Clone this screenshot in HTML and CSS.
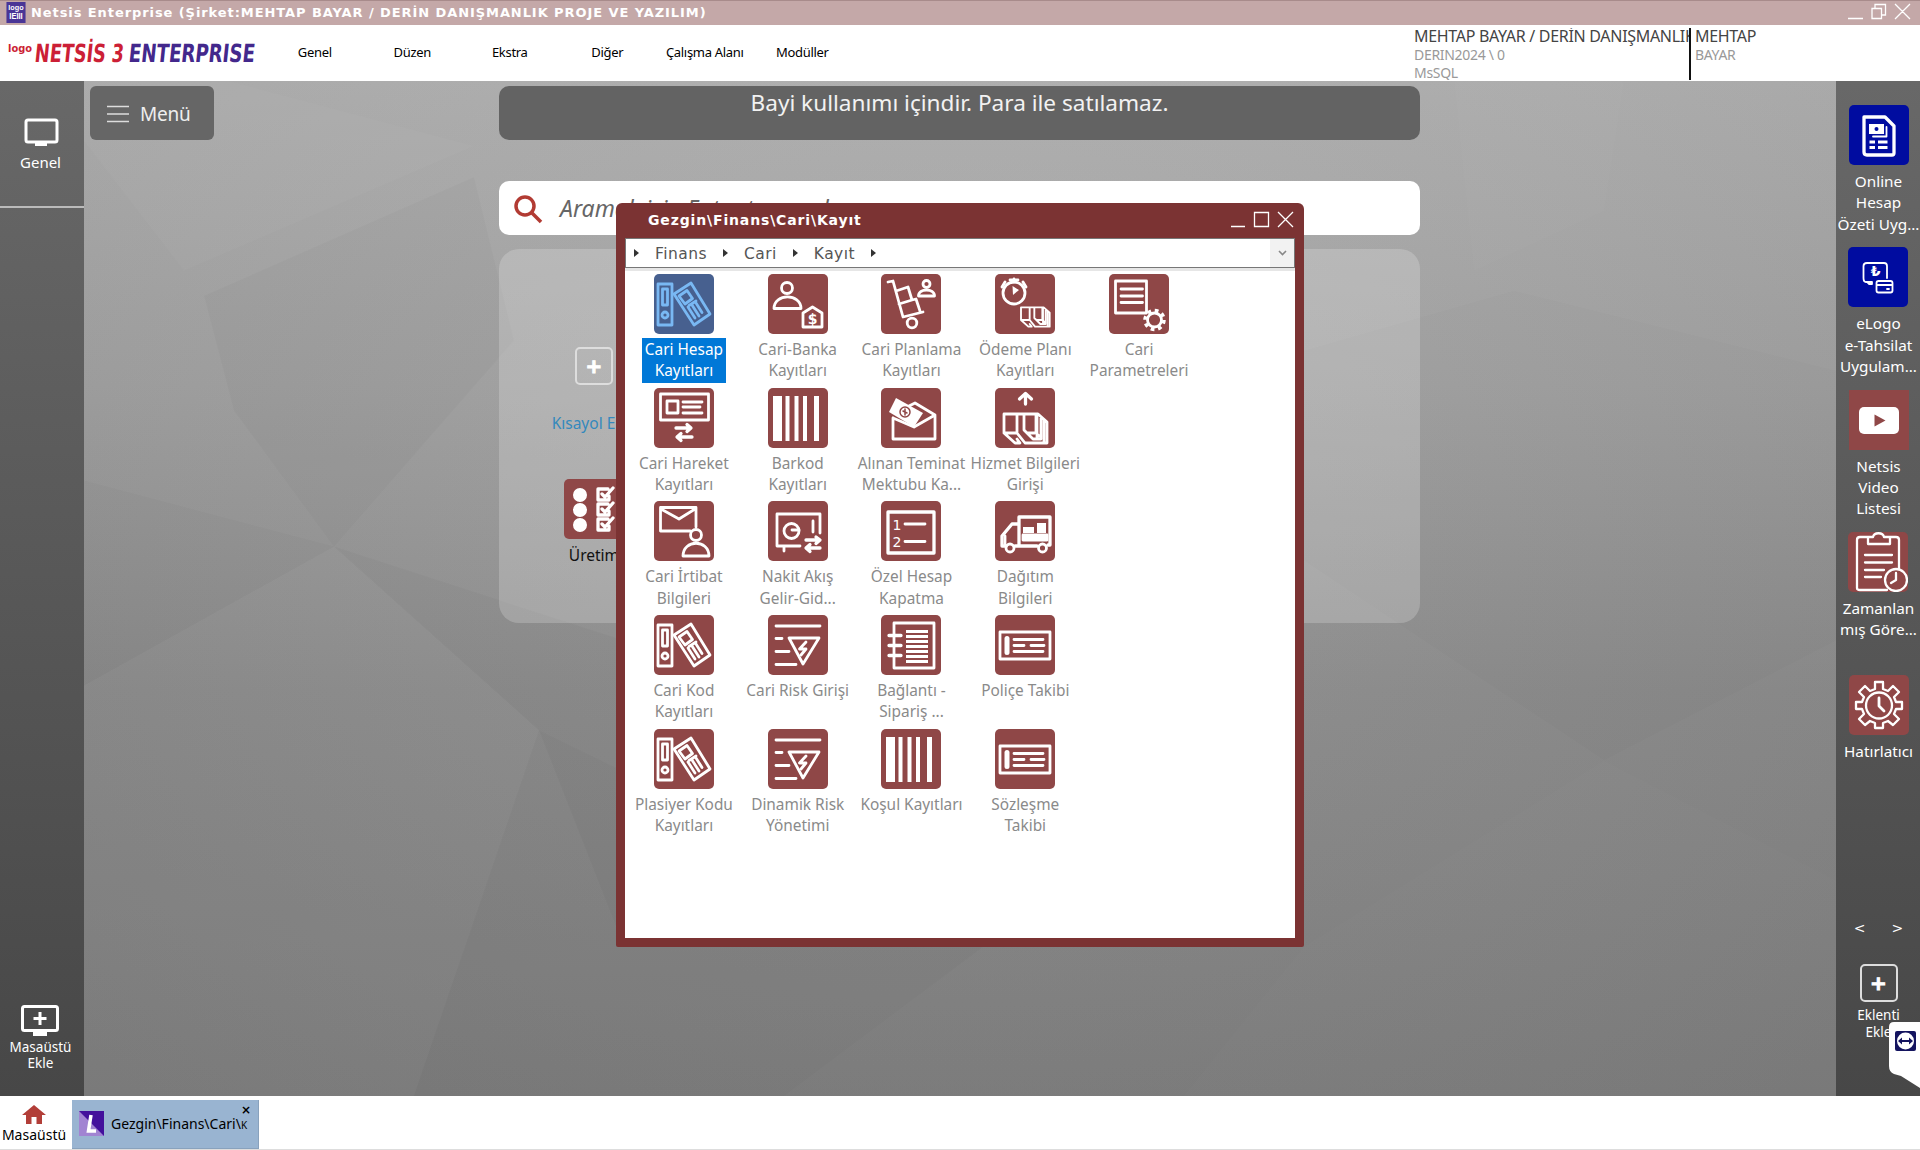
FILE: index.html
```html
<!DOCTYPE html>
<html lang="tr">
<head>
    <meta charset="UTF-8">
    <title>Netsis Enterprise</title>
    <link rel="stylesheet" href="styles.css">
</head>
<body>
    <!-- icon set, all drawn on a 60x60 tile -->
    <svg class="sprite" width="0" height="0">
        <symbol id="binders" viewBox="0 0 60 60">
            <rect x="4" y="10" width="14" height="41"/><rect x="8.5" y="15" width="5" height="16"/><circle cx="11" cy="41" r="3"/>
            <path d="M20 20L37 9L56 40L40 51Z"/><path d="M25 22L33 16.5L38.500 24.500L31 30Z"/><path d="M35 31.500L42 27M34 33L41 44M38 31L45 42M42 29L48 38.500"/>
        </symbol>
        <symbol id="bank" viewBox="0 0 60 60">
            <circle cx="19" cy="14" r="5.5"/><path d="M6 34.500C6 19 33 19 33 34.500Z"/>
            <path d="M35 39L44.500 33L54 39V53H35Z"/><text x="44.500" y="49.500" class="glyph">$</text>
        </symbol>
        <symbol id="trolley" viewBox="0 0 60 60">
            <path d="M7 8L12 7L22 43L42 38M15 17L27 13L31 26L18 30M31 26L35 25L39 37"/>
            <circle cx="31" cy="49" r="4.800"/><circle cx="45.500" cy="10" r="3.500"/><path d="M37.500 22C37.500 14 53.500 14 53.500 22Z"/>
        </symbol>
        <symbol id="cash" viewBox="0 0 60 60">
            <path d="M9 26H22V45H9ZM29 26H41V45H32L29 42ZM9 45L20 55H25L22 51M22 26H29M22 45L30 55H52V34L43 26H41M32 45L38 51H42V28M41 45L44 48M46 30V51H42M49 32V54"/>
        </symbol>
        <symbol id="payplan" viewBox="0 0 60 60">
            <circle cx="19" cy="19" r="11"/><path d="M15 6H23M10 8L7 13M28 8L31 13M19 5V8"/><path class="solid" d="M17.500 12L24 16L18 21Z"/>
            <use href="#cash" x="20" y="14" width="40" height="44"/>
        </symbol>
        <symbol id="params" viewBox="0 0 60 60">
            <rect x="6.500" y="7" width="31" height="32"/><path d="M12 15H33.500M12 22H33.500M12 28.500H33.500"/>
            <circle cx="45.500" cy="46" r="9.500" class="teeth"/><circle cx="45.500" cy="46" r="7" class="cover"/>
        </symbol>
        <symbol id="movement" viewBox="0 0 60 60">
            <rect x="6.500" y="6" width="48" height="26"/><rect x="13" y="13" width="11" height="12"/><path d="M29 14H48M29 19H46M29 25H48"/>
            <path class="thick" d="M22 40H36M33 36.500L37 40L33 43.500M38 49H24M27 45.500L23 49L27 52.500"/>
        </symbol>
        <symbol id="barcode" viewBox="0 0 60 60">
            <path class="solid" d="M5 8H14V53H5ZM17.500 8H21.500V53H17.500ZM26.500 8H30.500V53H26.500ZM35 8H39V53H35ZM46 8H51V53H46Z"/>
        </symbol>
        <symbol id="envelope" viewBox="0 0 60 60">
            <path d="M12 30V51H54V27L34 15L28 18M12 30L33 39L54 27"/><path class="solid" d="M15 10L42 25L33 39L8 24Z"/>
            <circle class="cut" cx="24" cy="24" r="5"/><path class="cut" d="M22 23L26 25M24 21V27"/>
        </symbol>
        <symbol id="service" viewBox="0 0 60 60">
            <path class="thick" d="M30.500 16V6M24.500 11L30.500 5.500L36.500 11"/><use href="#cash"/>
        </symbol>
        <symbol id="contact" viewBox="0 0 60 60">
            <path d="M36 30H6.500V6.500H42V26M7 8L25 18L41 8"/><circle cx="42" cy="34" r="5.500"/><path d="M29 55C29 38 55 38 55 55Z"/>
        </symbol>
        <symbol id="safe" viewBox="0 0 60 60">
            <path d="M52 32V13H9V45H32M16 45V50M45 20V31"/><circle cx="23.500" cy="30" r="7.500"/><path d="M31 29H24"/>
            <path class="thick" d="M38 39H51M48 36L52 39L48 42.500M52 47H39M42 43.500L38 47L42 50.500"/>
        </symbol>
        <symbol id="numbers" viewBox="0 0 60 60">
            <rect x="7" y="11" width="46" height="41" class="wide"/><path d="M24 23H44M24 40.500H44"/>
            <text x="16" y="28.500" class="num">1</text><text x="16" y="46" class="num">2</text>
        </symbol>
        <symbol id="truck" viewBox="0 0 60 60">
            <path class="wide" d="M11 45H7V35L17 23H24V45M20 45H42M24 43V16H55V44H53"/><circle cx="15" cy="47" r="4"/><circle cx="47.500" cy="47" r="4"/>
            <path d="M28 34H52V39H28ZM10 35V43"/><path class="solid" d="M28 26H39V32H28ZM42 22H51V32H42ZM28 35H52V38H28Z"/>
        </symbol>
        <symbol id="risk" viewBox="0 0 60 60">
            <path d="M8 11H52M8 23.500H14M8 36.500H21M8 49.500H28M21 23H51L35 49Z"/><path d="M38 27L31.500 34H38L33 40"/>
        </symbol>
        <symbol id="notebook" viewBox="0 0 60 60">
            <rect x="13" y="8" width="40" height="45"/><path class="thick" d="M8 20.500H20M8 30.500H20M8 40.500H20"/>
            <path class="rows" d="M25 16.500H47M25 21.500H47M25 26.500H47M25 31.500H47M25 36.500H47M25 41.500H47M25 46.500H47"/>
        </symbol>
        <symbol id="policy" viewBox="0 0 60 60">
            <rect x="5" y="17" width="50" height="27"/><path class="bar" d="M12 23.500V37.500"/><path d="M19 24.500H48M19 30.500H29M36 30.500H49M19 36.500H48"/>
        </symbol>
        <symbol id="checks" viewBox="0 0 60 60">
            <path class="solid" d="M9 16a7 7 0 1 0 14 0a7 7 0 1 0-14 0M9 31a7 7 0 1 0 14 0a7 7 0 1 0-14 0M9 46a7 7 0 1 0 14 0a7 7 0 1 0-14 0"/>
            <path class="thick" d="M44 10H34V21H45V17M38 15L41 18L49 9M44 25H34V36H45V32M38 30L41 33L49 24M44 40H34V51H45V47M38 45L41 48L49 39"/>
        </symbol>
        <symbol id="statement" viewBox="0 0 60 60">
            <path class="thick" d="M15 12H36L45 21V48Q45 50 43 50H18Q15 50 15 47Z"/><path class="solid" d="M20 19H35V29H20Z"/><circle cx="27.500" cy="24" r="2" class="hole"/>
            <path d="M37.500 22V31.500H24" class="thin"/><path class="rows" d="M20.500 37H26M29 37H38.500M20.500 42.500H26M29 42.500H38.500"/>
        </symbol>
        <symbol id="collect" viewBox="0 0 60 60">
            <path class="thin" d="M24 36H20M39 31V19Q39 16 36 16H19Q15.500 16 15.500 19V31Q15.500 35 18 35H24V37H21"/><text x="27.500" y="29" class="glyph">₺</text>
            <rect class="thin" x="28.500" y="34" width="16" height="11.500" rx="2"/><path class="thin" d="M29 38H44M39 42H41"/>
        </symbol>
        <symbol id="video" viewBox="0 0 60 60">
            <rect class="solid" x="10" y="17" width="40" height="27" rx="5"/><path class="hole" d="M25.500 24.500V36.500L36.500 30.500Z"/>
        </symbol>
        <symbol id="tasks" viewBox="0 0 60 60">
            <path class="slim" d="M20 5H12Q9 5 9 8V56Q9 58 12 58H39M42 5H48Q51 5 51 8V38M42 5H36C35 0 26 0 25 5H20V12H42Z"/>
            <path class="slim" d="M17 23H44M17 30.500H44M17 38H36M17 45H33"/><circle cx="48" cy="48" r="11" class="cover slim"/><path class="slim" d="M48 41V48L43 51"/>
        </symbol>
        <symbol id="gear" viewBox="0 0 60 60">
            <path class="slim" d="M26 7H34V14L39 16L44 11L50 17L45 22L47 27H53V34H47L45 39L50 44L44 50L39 46L34 48V53H26V48L21 46L16 50L10 44L15 39L13 34H7V27H13L15 22L10 17L16 11L21 16L26 14Z"/>
            <circle class="slim" cx="30" cy="30.500" r="13"/><path d="M30 23V31L35 36"/>
        </symbol>
    </svg>

    <div class="titlebar">
        <svg class="app-icon" viewBox="0 0 20 22"><rect width="20" height="22"/><text x="2" y="8" textLength="16" lengthAdjust="spacingAndGlyphs">logo</text><text x="3" y="18" class="big" textLength="14" lengthAdjust="spacingAndGlyphs">IEIII</text></svg>
        <span class="app-title">Netsis Enterprise (Şirket:MEHTAP BAYAR / DERİN DANIŞMANLIK PROJE VE YAZILIM)</span>
        <svg class="controls" width="66" height="24" viewBox="0 0 66 24"><path d="M3 18.500H18M27 8.500H36.500V18.500H27ZM30 8V4.500H40.500V15H37M50 4L65 19M65 4L50 19"/></svg>
    </div>

    <div class="header">
        <svg class="logo" width="262" height="56" viewBox="0 0 262 56">
            <text class="red small" x="8" y="27" textLength="24" lengthAdjust="spacingAndGlyphs">logo</text>
            <g transform="translate(4 0) skewX(-6)">
                <text class="red" x="34" y="37" textLength="71" lengthAdjust="spacingAndGlyphs">NETSİS</text>
                <text class="red" x="111" y="37" textLength="12" lengthAdjust="spacingAndGlyphs">3</text>
                <text class="purple" x="128" y="37" textLength="126" lengthAdjust="spacingAndGlyphs">ENTERPRISE</text>
            </g>
        </svg>
        <div class="menu">
            <span>Genel</span><span>Düzen</span><span>Ekstra</span><span>Diğer</span><span>Çalışma Alanı</span><span>Modüller</span>
        </div>
        <div class="company">
            <div class="name">MEHTAP BAYAR / DERİN DANIŞMANLIK</div>
            <div>DERIN2024 \ 0</div>
            <div>MsSQL</div>
        </div>
        <div class="user">
            <div class="name">MEHTAP</div>
            <div>BAYAR</div>
        </div>
    </div>

    <div class="main">
        <div class="sidebar left">
            <div class="side-tab">
                <svg width="36" height="30" viewBox="0 0 36 30"><rect x="3" y="3" width="31" height="22" rx="2"/><path class="solid" d="M12 25H24V29H12Z"/></svg>
                <span>Genel</span>
            </div>
            <div class="side-add">
                <svg width="40" height="33" viewBox="0 0 40 33"><rect x="2.500" y="2.500" width="35" height="24" rx="2"/><path class="solid" d="M13 27H27V32H13Z"/><path d="M20 8V21M13.500 14.500H26.500"/></svg>
                <span>Masaüstü<br>Ekle</span>
            </div>
        </div>

        <div class="desktop">
            <svg class="wallpaper" viewBox="0 0 1752 1016" preserveAspectRatio="none">
                <path fill="#fff" opacity=".025" d="M145 0L390 65L100 190L0 60V0Z"/>
                <path fill="#000" opacity=".02" d="M120 215L390 96L430 260L250 466L150 330Z"/>
                <path fill="#fff" opacity=".015" d="M0 605L250 466L455 650L330 1016H0Z"/>
                <path fill="#000" opacity=".025" d="M250 466L540 560V866L455 650Z"/>
                <path fill="#000" opacity=".02" d="M0 400L250 466L0 605Z"/>
                <path fill="#fff" opacity=".015" d="M1370 0L1540 0L1520 130L1390 190Z"/>
                <path fill="#000" opacity=".012" d="M1220 270L1430 210L1752 290V560L1520 680L1220 480Z"/>
                <path fill="#fff" opacity=".012" d="M1220 866L1520 680L1752 800V1016H1100Z"/>
                <path fill="#000" opacity=".015" d="M455 650L900 866L700 1016H330Z"/>
            </svg>
            <div class="menu-button">
                <svg width="24" height="18" viewBox="0 0 24 18"><path d="M1 1.500H23M1 9H23M1 16.500H23"/></svg>
                <span>Menü</span>
            </div>
            <div class="center">
                <div class="notice">Bayi kullanımı içindir. Para ile satılamaz.</div>
                <div class="search">
                    <svg width="32" height="32" viewBox="0 0 32 32"><circle cx="12" cy="12" r="9"/><path d="M18.500 18.500L28 28"/></svg>
                    <span>Aramak için Enter tuşuna basınız</span>
                </div>
                <div class="shortcuts">
                    <div class="shortcut-add"><div class="plus">+</div><span>Kısayol Ekle</span></div>
                    <div class="shortcut"><svg class="tile"><use href="#checks"/></svg><span>Üretim</span></div>
                </div>
            </div>
        </div>

        <div class="sidebar right">
            <div class="app"><svg class="tile blue"><use href="#statement"/></svg><span>Online<br>Hesap<br>Özeti Uyg...</span></div>
            <div class="app"><svg class="tile blue"><use href="#collect"/></svg><span>eLogo<br>e-Tahsilat<br>Uygulam...</span></div>
            <div class="app"><svg class="tile square"><use href="#video"/></svg><span>Netsis<br>Video<br>Listesi</span></div>
            <div class="app"><svg class="tile"><use href="#tasks"/></svg><span>Zamanlan<br>mış Göre...</span></div>
            <div class="app"><svg class="tile"><use href="#gear"/></svg><span>Hatırlatıcı</span></div>
            <div class="pager"><span>&lt;</span><span>&gt;</span></div>
            <div class="plus">+</div>
            <div class="plugin-label">Eklenti<br>Ekle</div>
        </div>

        <div class="window">
            <div class="window-title">
                <span>Gezgin\Finans\Cari\Kayıt</span>
                <svg class="controls" width="66" height="24" viewBox="0 0 66 24"><path d="M2 18.500H16M25.500 4.500H39.500V18.500H25.500ZM49 4L64 19M64 4L49 19"/></svg>
            </div>
            <div class="breadcrumb">
                <i></i><span>Finans</span><i></i><span>Cari</span><i></i><span>Kayıt</span><i></i>
                <div class="dropdown"><svg width="9" height="6" viewBox="0 0 9 6"><path d="M1 1L4.500 4.500L8 1"/></svg></div>
            </div>
            <div class="window-body">
                <div class="item selected"><svg class="tile"><use href="#binders"/></svg><span>Cari Hesap<br>Kayıtları</span></div>
                <div class="item"><svg class="tile"><use href="#bank"/></svg><span>Cari-Banka<br>Kayıtları</span></div>
                <div class="item"><svg class="tile"><use href="#trolley"/></svg><span>Cari Planlama<br>Kayıtları</span></div>
                <div class="item"><svg class="tile"><use href="#payplan"/></svg><span>Ödeme Planı<br>Kayıtları</span></div>
                <div class="item"><svg class="tile"><use href="#params"/></svg><span>Cari<br>Parametreleri</span></div>

                <div class="item first"><svg class="tile"><use href="#movement"/></svg><span>Cari Hareket<br>Kayıtları</span></div>
                <div class="item"><svg class="tile"><use href="#barcode"/></svg><span>Barkod<br>Kayıtları</span></div>
                <div class="item"><svg class="tile"><use href="#envelope"/></svg><span>Alınan Teminat<br>Mektubu Ka...</span></div>
                <div class="item"><svg class="tile"><use href="#service"/></svg><span>Hizmet Bilgileri<br>Girişi</span></div>

                <div class="item first"><svg class="tile"><use href="#contact"/></svg><span>Cari İrtibat<br>Bilgileri</span></div>
                <div class="item"><svg class="tile"><use href="#safe"/></svg><span>Nakit Akış<br>Gelir-Gid...</span></div>
                <div class="item"><svg class="tile"><use href="#numbers"/></svg><span>Özel Hesap<br>Kapatma</span></div>
                <div class="item"><svg class="tile"><use href="#truck"/></svg><span>Dağıtım<br>Bilgileri</span></div>

                <div class="item first"><svg class="tile"><use href="#binders"/></svg><span>Cari Kod<br>Kayıtları</span></div>
                <div class="item"><svg class="tile"><use href="#risk"/></svg><span>Cari Risk Girişi</span></div>
                <div class="item"><svg class="tile"><use href="#notebook"/></svg><span>Bağlantı -<br>Sipariş ...</span></div>
                <div class="item"><svg class="tile"><use href="#policy"/></svg><span>Poliçe Takibi</span></div>

                <div class="item first"><svg class="tile"><use href="#binders"/></svg><span>Plasiyer Kodu<br>Kayıtları</span></div>
                <div class="item"><svg class="tile"><use href="#risk"/></svg><span>Dinamik Risk<br>Yönetimi</span></div>
                <div class="item"><svg class="tile"><use href="#barcode"/></svg><span>Koşul Kayıtları</span></div>
                <div class="item"><svg class="tile"><use href="#policy"/></svg><span>Sözleşme<br>Takibi</span></div>
            </div>
        </div>

        <svg class="remote-tag" width="31" height="66" viewBox="0 0 31 66">
            <path fill="#fff" d="M31 0H5Q0 0 0 5V44Q0 50 5 52L12 54L31 66Z"/>
            <rect x="6" y="9" width="21" height="20" rx="2" fill="#14145f"/><circle cx="16.500" cy="19" r="8.500" fill="#fff"/>
            <path fill="#14145f" d="M9 19L13 15.500V18H20V15.500L24 19L20 22.500V20H13V22.500Z"/>
        </svg>
    </div>

    <div class="taskbar">
        <div class="home">
            <svg width="24" height="19" viewBox="0 0 24 19"><path d="M12 0L24 10H20V19H14.500V12H9.500V19H4V10H0Z"/></svg>
            <span>Masaüstü</span>
        </div>
        <div class="task">
            <svg width="25" height="25" viewBox="0 0 25 25"><rect width="25" height="25" fill="#43109c"/><path fill="#a184d2" d="M0 0L25 25H0Z"/><path fill="none" stroke="#fff" stroke-width="3.500" d="M12 4L9.500 20H17"/></svg>
            <span>Gezgin\Finans\Cari\<small>K</small></span>
            <b>×</b>
        </div>
    </div>
</body>
</html>
```

FILE: styles.css
```css
* {
    box-sizing: border-box;
}
body {
    margin: 0;
    width: 1920px;
    height: 1150px;
    overflow: hidden;
    display: flex;
    flex-direction: column;
    font-family: "Noto Sans", "Open Sans", sans-serif;
    background: #fff;
}
svg {
    display: block;
    flex: none;
}
.sprite {
    position: absolute;
}

/* title bar */
.titlebar {
    height: 25px;
    flex: none;
    display: flex;
    align-items: center;
    padding: 0 9px 2px 6px;
    background: #c4a8a8;
    border-top: 1px solid #a88b8b;
}
.app-icon {
    width: 20px;
    height: 21px;
    fill: #4a3596;
}
.app-icon text {
    fill: #fff;
    font: bold 7px "Liberation Sans", sans-serif;
}
.app-icon .big {
    font-size: 9px;
}
.app-title {
    margin-left: 5px;
    font: bold 13px "DejaVu Sans", sans-serif;
    letter-spacing: 0.92px;
    color: #fff;
    white-space: nowrap;
}
.controls {
    margin-left: auto;
    fill: none;
    stroke: #fff;
    stroke-width: 1.3;
}

/* header */
.header {
    height: 56px;
    flex: none;
    display: flex;
}
.logo text {
    font: bold 25px "DejaVu Sans Condensed", "DejaVu Sans", sans-serif;
}
.logo .small {
    font-size: 11px;
}
.logo .red {
    fill: #cc1f36;
}
.logo .purple {
    fill: #43288c;
}
.menu {
    width: 1152px;
    display: flex;
    padding: 17px 0 0 4px;
    font-size: 13px;
    line-height: 20px;
    letter-spacing: -0.3px;
}
.menu span {
    width: 97.500px;
    text-align: center;
    white-space: nowrap;
}
.company, .user {
    font-size: 14px;
    line-height: 18px;
    color: #999;
    white-space: nowrap;
    letter-spacing: -0.3px;
}
.company {
    width: 277px;
    height: 52px;
    margin-top: 3px;
    overflow: hidden;
    border-right: 2px solid #111;
}
.user {
    margin: 3px 0 0 4px;
}
.name {
    color: #444;
    font-size: 16px;
    line-height: 16px;
    padding-bottom: 2px;
}

/* main area */
.main {
    height: 1015px;
    flex: none;
    display: flex;
    position: relative;
}
.sidebar {
    width: 84px;
    flex: none;
    display: flex;
    flex-direction: column;
    align-items: center;
    color: #fff;
    background: linear-gradient(#686868, #474747);
}
.sidebar.left svg {
    fill: none;
    stroke: #fff;
    stroke-width: 3;
}
.sidebar.left .solid {
    fill: #fff;
    stroke: none;
}
.side-tab {
    width: 100%;
    height: 127px;
    padding: 36px 3px 0 0;
    display: flex;
    flex-direction: column;
    align-items: center;
    border-bottom: 2px solid #bbb;
    font-size: 15px;
    line-height: 22px;
}
.side-tab span {
    margin-top: 4px;
}
.side-add {
    margin: auto 3px 25px 0;
    display: flex;
    flex-direction: column;
    align-items: center;
    text-align: center;
    font-size: 13.500px;
    line-height: 16px;
}
.side-add span {
    margin-top: 2px;
}
.desktop {
    flex: 1;
    display: flex;
    position: relative;
    background: radial-gradient(ellipse at 50% 38%, rgba(255, 255, 255, 0.06), rgba(0, 0, 0, 0.05)), linear-gradient(#b0b0b0, #a0a0a0 30%, #8b8b8b 60%, #7e7e7e);
}
.wallpaper {
    position: absolute;
    inset: 0;
    width: 100%;
    height: 100%;
}
.menu-button {
    position: relative;
    width: 124px;
    height: 54px;
    margin: 5px 0 0 6px;
    padding: 2px 0 0 16px;
    display: flex;
    align-items: center;
    gap: 10px;
    border-radius: 6px;
    background: #666;
    color: #eee;
    font-size: 19px;
    letter-spacing: -0.2px;
}
.menu-button svg {
    fill: none;
    stroke: #ddd;
    stroke-width: 1.6;
}
.center {
    position: relative;
    width: 921px;
    margin: 5px 0 0 285px;
}
.notice {
    height: 54px;
    border-radius: 10px;
    background: #636363;
    color: #f2f2f2;
    font-size: 22.600px;
    line-height: 33px;
    text-align: center;
}
.search {
    height: 54px;
    margin-top: 41px;
    padding-left: 14px;
    display: flex;
    align-items: center;
    gap: 15px;
    border-radius: 10px;
    background: #fff;
    color: #666;
    font-size: 23px;
    font-style: italic;
}
.search svg {
    margin-top: 3px;
    fill: none;
    stroke: #b23b33;
    stroke-width: 3.5;
}
.shortcuts {
    height: 374px;
    margin-top: 14px;
    padding: 98px 0 0 50px;
    border-radius: 20px;
    background: rgba(255, 255, 255, 0.2);
    font-size: 15.500px;
}
.shortcut, .shortcut-add {
    width: 90px;
    display: flex;
    flex-direction: column;
    align-items: center;
    white-space: nowrap;
}
.shortcut-add {
    height: 132px;
    gap: 27px;
    color: #3489bd;
}
.shortcut {
    gap: 5px;
    color: #111;
}
.plus {
    width: 38px;
    height: 38px;
    flex: none;
    border: 2px solid #ddd;
    border-radius: 5px;
    color: #fff;
    font: bold 20px/34px "DejaVu Sans", sans-serif;
    -webkit-text-stroke: 1px #fff;
    text-align: center;
}

/* icon tiles */
.tile {
    width: 60px;
    height: 60px;
    border-radius: 5px;
    background: #8f4747;
    color: #fff;
    fill: none;
    stroke: currentColor;
    stroke-width: 2.8;
    stroke-linejoin: round;
    stroke-linecap: round;
    --tile: #8f4747;
}
.tile.blue {
    background: #000ca0;
    --tile: #000ca0;
}
.tile.square {
    border-radius: 0;
}
.solid {
    fill: currentColor;
    stroke: none;
}
.thick, .wide {
    stroke-width: 3.3;
}
.rows {
    stroke-width: 3;
    stroke-linecap: butt;
}
.thin {
    stroke-width: 1.8;
}
.slim {
    stroke-width: 2.3;
}
.bar {
    stroke-width: 5;
}
.hole {
    fill: var(--tile);
    stroke: none;
}
.cut {
    stroke: var(--tile);
    stroke-width: 1.5;
}
.cover {
    fill: var(--tile);
}
.teeth {
    stroke-width: 3.5;
    stroke-dasharray: 3.700 3.760;
    stroke-linecap: butt;
}
.glyph, .num {
    fill: currentColor;
    stroke: none;
    font: bold 14px "DejaVu Sans", sans-serif;
    text-anchor: middle;
}
.num {
    font-size: 14px;
    font-weight: normal;
}

/* right sidebar */
.right {
    padding: 24px 0 0 1px;
}
.app {
    height: 142.400px;
    flex: none;
    display: flex;
    flex-direction: column;
    align-items: center;
    gap: 6px;
    text-align: center;
    white-space: nowrap;
    font-size: 15.300px;
    line-height: 21.300px;
}
.pager {
    display: flex;
    gap: 26px;
    margin: 99px 0 24px;
    font: 14px/24px "DejaVu Sans", sans-serif;
    height: 24px;
}
.plugin-label {
    margin-top: 5px;
    text-align: center;
    font-size: 13.500px;
    line-height: 17px;
}
.remote-tag {
    position: absolute;
    right: 0;
    top: 941px;
}

/* explorer window */
.window {
    position: absolute;
    left: 616px;
    top: 122px;
    width: 688px;
    height: 744px;
    padding: 0 9px 9px;
    display: flex;
    flex-direction: column;
    border-radius: 6px 6px 2px 2px;
    background: #7b3333;
}
.window-title {
    height: 35px;
    padding: 0 0 1px 23px;
    display: flex;
    align-items: center;
    font: bold 14px "DejaVu Sans", sans-serif;
    letter-spacing: 0.85px;
    color: #fff;
}
.breadcrumb {
    height: 30px;
    display: flex;
    align-items: center;
    padding-left: 8px;
    border: 1px solid #777;
    background: #fff;
    color: #555;
    font: 15.500px "DejaVu Sans", sans-serif;
    letter-spacing: 0.45px;
}
.breadcrumb i {
    border-left: 5px solid #333;
    border-top: 4px solid transparent;
    border-bottom: 4px solid transparent;
}
.breadcrumb span {
    margin: 2px 16px 0;
}
.dropdown {
    width: 24px;
    height: 28px;
    margin-left: auto;
    display: flex;
    align-items: center;
    justify-content: center;
    background: #f2f2f2;
}
.dropdown svg {
    fill: none;
    stroke: #888;
    stroke-width: 1.6;
}
.window-body {
    flex: 1;
    display: grid;
    grid-template-columns: repeat(5, 113.800px);
    grid-auto-rows: 113.700px;
    padding: 3px 0 0 2px;
    background: #fff;
    border-top: 3px solid #e6e6e6;
}
.item {
    display: flex;
    flex-direction: column;
    align-items: center;
    gap: 4px;
    text-align: center;
    white-space: nowrap;
    color: #8a8a8a;
    font-size: 15.400px;
    line-height: 21.300px;
}
.item.first {
    grid-column: 1;
}
.item span {
    padding: 1px 3px;
}
.selected span {
    background: #0078d7;
    color: #fff;
}
.selected .tile {
    background: #47608f;
    color: #79b8f3;
}

/* task bar */
.taskbar {
    flex: 1;
    display: flex;
    align-items: flex-start;
    background: #fff;
    border-bottom: 1px solid #ddd;
    font-size: 14px;
}
.home {
    width: 72px;
    padding: 9px 4px 0 0;
    display: flex;
    flex-direction: column;
    align-items: center;
    gap: 1px;
    line-height: 19px;
}
.home svg {
    fill: #b23e38;
}
.task {
    position: relative;
    width: 187px;
    height: 49px;
    margin-top: 4px;
    padding: 0 0 2px 7px;
    display: flex;
    align-items: center;
    gap: 7px;
    border: solid #89a2bd;
    border-width: 0 1px 1px 0;
    background: #99b4d1;
}
.task small {
    font-size: 10px;
}
.task b {
    position: absolute;
    right: 7px;
    top: 3px;
    font: bold 12px "DejaVu Sans", sans-serif;
}
```
